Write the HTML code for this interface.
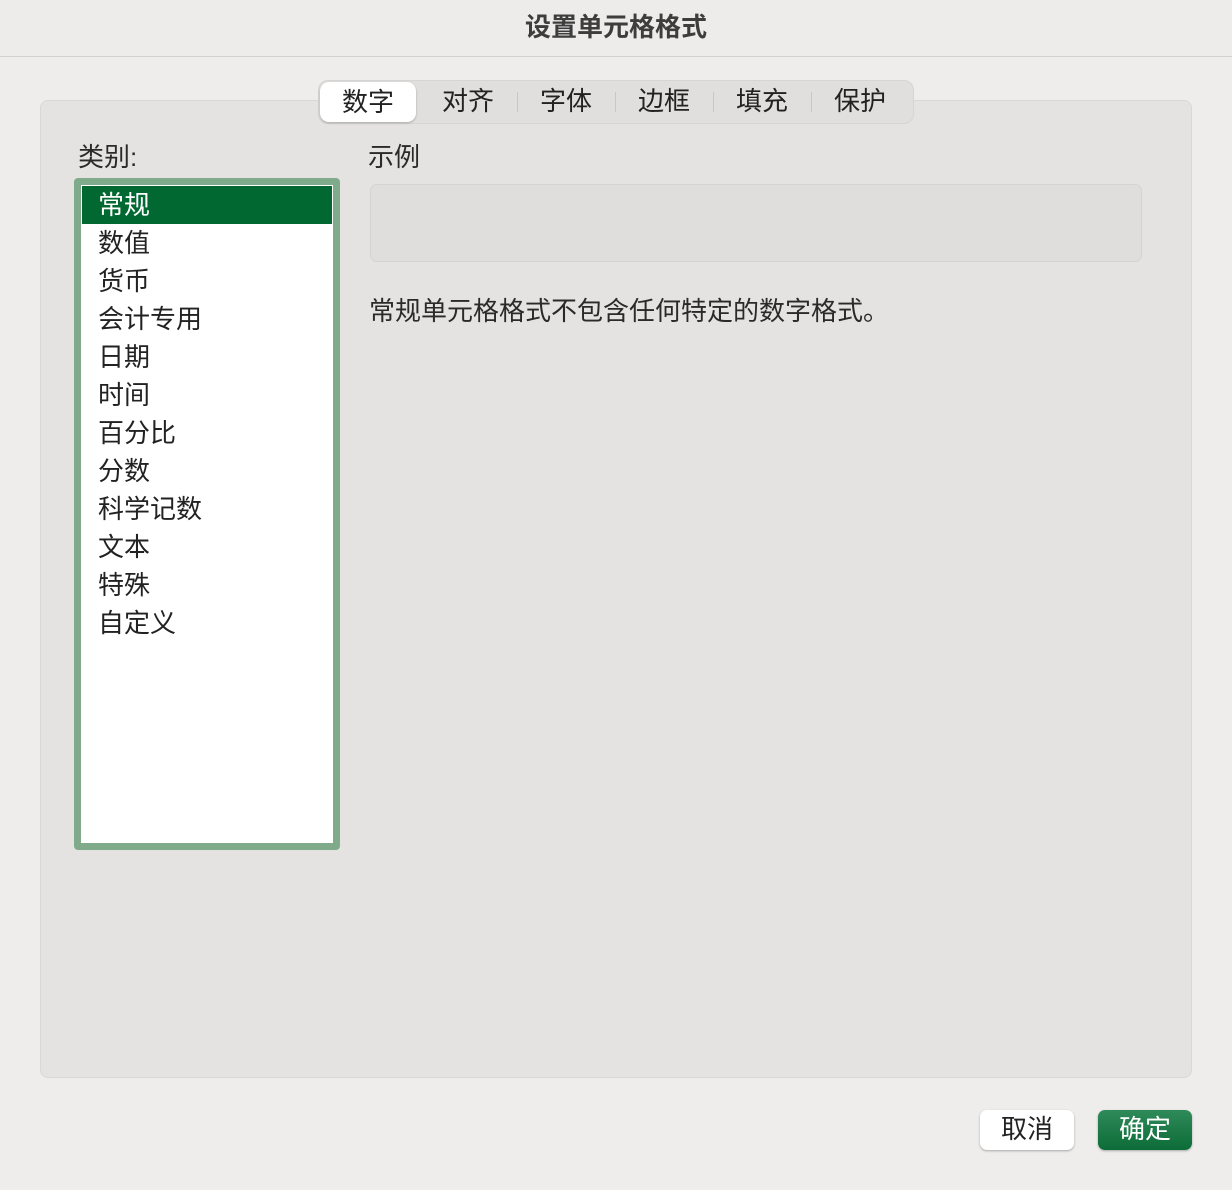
<!DOCTYPE html>
<html><head><meta charset="utf-8"><style>
*{margin:0;padding:0;box-sizing:border-box}
body{width:1232px;height:1190px;background:#eeedeb;font-family:"Liberation Sans","Noto Sans CJK SC",sans-serif;color:#222;position:relative;overflow:hidden}
.title{position:absolute;left:0;top:0;width:1232px;height:57px;border-bottom:1px solid #d2d1cf;text-align:center;line-height:54px;font-size:26px;font-weight:bold;color:#3d3d3d;background:#edecea}
.panel{position:absolute;left:40px;top:100px;width:1152px;height:978px;background:#e4e3e1;border:1px solid #d9d8d6;border-radius:8px}
.tabs{position:absolute;left:318px;top:80px;width:596px;height:44px;background:#e0dfdd;border:1px solid #d6d5d3;border-radius:10px}
.tab{position:absolute;top:0;height:42px;line-height:40px;font-size:26px;color:#222;text-align:center;width:98px}
.sel{left:1px;top:1px;height:40px;width:96px;background:#fff;border-radius:9px;box-shadow:0 1px 2px rgba(0,0,0,.25)}
.sep{position:absolute;top:11px;width:1px;height:20px;background:#c8c7c5}
.lbl{position:absolute;font-size:26px;color:#2a2a2a;line-height:32px}
.list{position:absolute;left:74px;top:178px;width:266px;height:672px;background:#7fab8b;border-radius:4px}
.inner{position:absolute;left:7px;top:7px;width:252px;height:658px;background:#fff}
.item{height:38px;line-height:38px;padding-left:17px;font-size:26px;color:#222}
.item.on{background:#026831;color:#fff;margin-top:1px;margin-left:1px;margin-right:1px}
.sample{position:absolute;left:370px;top:184px;width:772px;height:78px;background:#dfdedc;border:1px solid #d5d4d2;border-radius:7px}
.btn{position:absolute;top:1110px;height:40px;border-radius:7px;font-size:26px;text-align:center;line-height:38px}
</style></head><body>
<div class="title">设置单元格格式</div>
<div class="panel"></div>
<div class="tabs">
<div class="tab sel">数字</div>
<div class="tab" style="left:100px">对齐</div>
<div class="sep" style="left:198px"></div>
<div class="tab" style="left:198px">字体</div>
<div class="sep" style="left:296px"></div>
<div class="tab" style="left:296px">边框</div>
<div class="sep" style="left:394px"></div>
<div class="tab" style="left:394px">填充</div>
<div class="sep" style="left:492px"></div>
<div class="tab" style="left:492px">保护</div>
</div>
<div class="lbl" style="left:78px;top:141px">类别:</div>
<div class="lbl" style="left:368px;top:141px">示例</div>
<div class="list"><div class="inner">
<div class="item on" style="padding-left:16px;height:38px">常规</div>
<div class="item">数值</div><div class="item">货币</div><div class="item">会计专用</div><div class="item">日期</div><div class="item">时间</div><div class="item">百分比</div><div class="item">分数</div><div class="item">科学记数</div><div class="item">文本</div><div class="item">特殊</div><div class="item">自定义</div>
</div></div>
<div class="sample"></div>
<div class="lbl" style="left:369px;top:295px">常规单元格格式不包含任何特定的数字格式。</div>
<div class="btn" style="left:980px;width:94px;background:#fff;box-shadow:0 1px 2px rgba(0,0,0,.3);color:#222">取消</div>
<div class="btn" style="left:1098px;width:94px;background:linear-gradient(#2f8a5a,#0c6c37);color:#fff;box-shadow:0 1px 2px rgba(0,0,0,.3)">确定</div>
</body></html>
